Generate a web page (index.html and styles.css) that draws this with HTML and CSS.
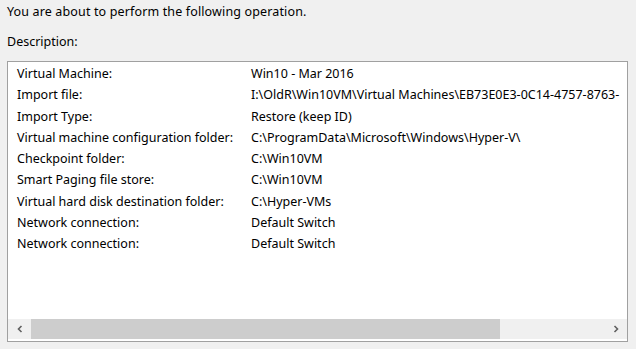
FILE: index.html
```html
<!DOCTYPE html>
<html>
<head>
<meta charset="utf-8">
<link rel="stylesheet" href="styles.css">
</head>
<body>
<div class="dialog">
  <p class="intro">You are about to perform the following operation.</p>
  <p class="desc">Description:</p>
  <div class="box">
    <div class="list">
      <div class="row"><span class="label">Virtual Machine:</span><span class="value">Win10 - Mar 2016</span></div>
      <div class="row"><span class="label">Import file:</span><span class="value">I:\OldR\Win10VM\Virtual Machines\EB73E0E3-0C14-4757-8763-</span></div>
      <div class="row"><span class="label">Import Type:</span><span class="value">Restore (keep ID)</span></div>
      <div class="row"><span class="label">Virtual machine configuration folder:</span><span class="value">C:\ProgramData\Microsoft\Windows\Hyper-V\</span></div>
      <div class="row"><span class="label">Checkpoint folder:</span><span class="value">C:\Win10VM</span></div>
      <div class="row"><span class="label">Smart Paging file store:</span><span class="value">C:\Win10VM</span></div>
      <div class="row"><span class="label">Virtual hard disk destination folder:</span><span class="value">C:\Hyper-VMs</span></div>
      <div class="row"><span class="label">Network connection:</span><span class="value">Default Switch</span></div>
      <div class="row"><span class="label">Network connection:</span><span class="value">Default Switch</span></div>
    </div>
    <div class="hscroll">
      <div class="arrow left"><svg width="8" height="8" viewBox="0 0 8 8"><path d="M5.5 1 L2.5 4 L5.5 7" fill="none" stroke="#606060" stroke-width="1.6"/></svg></div>
      <div class="track"><div class="thumb"></div></div>
      <div class="arrow right"><svg width="8" height="8" viewBox="0 0 8 8"><path d="M2.5 1 L5.5 4 L2.5 7" fill="none" stroke="#606060" stroke-width="1.6"/></svg></div>
    </div>
  </div>
</div>
</body>
</html>
```
FILE: styles.css
```css
html, body {
  margin: 0;
  padding: 0;
  background: #f0f0f0;
}
body {
  font-family: "Noto Sans", "Open Sans", sans-serif;
  font-size: 12.5px;
  color: #000;
  width: 636px;
  height: 349px;
  overflow: hidden;
}
.dialog {
  padding: 3px 8px 0 7px;
}
.intro {
  margin: 0;
  line-height: 18px;
  letter-spacing: 0.14px;
}
.desc {
  margin: 12px 0 0 0;
  line-height: 18px;
}
.box {
  margin-top: 10px;
  width: 619px;
  height: 279px;
  border: 1px solid #a0a0a0;
  background: #fff;
  display: flex;
  flex-direction: column;
  overflow: hidden;
}
.list {
  flex: 1;
  padding: 1px 0 0 9px;
  overflow: hidden;
}
.row {
  display: flex;
  height: 21.25px;
  line-height: 21px;
  white-space: nowrap;
}
.label {
  width: 234px;
  flex: none;
}
.value {
  flex: none;
}
.hscroll {
  height: 20px;
  margin-bottom: 2px;
  display: flex;
  background: #f0f0f0;
}
.arrow {
  width: 23px;
  flex: none;
  display: flex;
  align-items: center;
  justify-content: center;
}
.track {
  flex: 1;
  display: flex;
}
.thumb {
  width: 469px;
  background: #cdcdcd;
}
```
